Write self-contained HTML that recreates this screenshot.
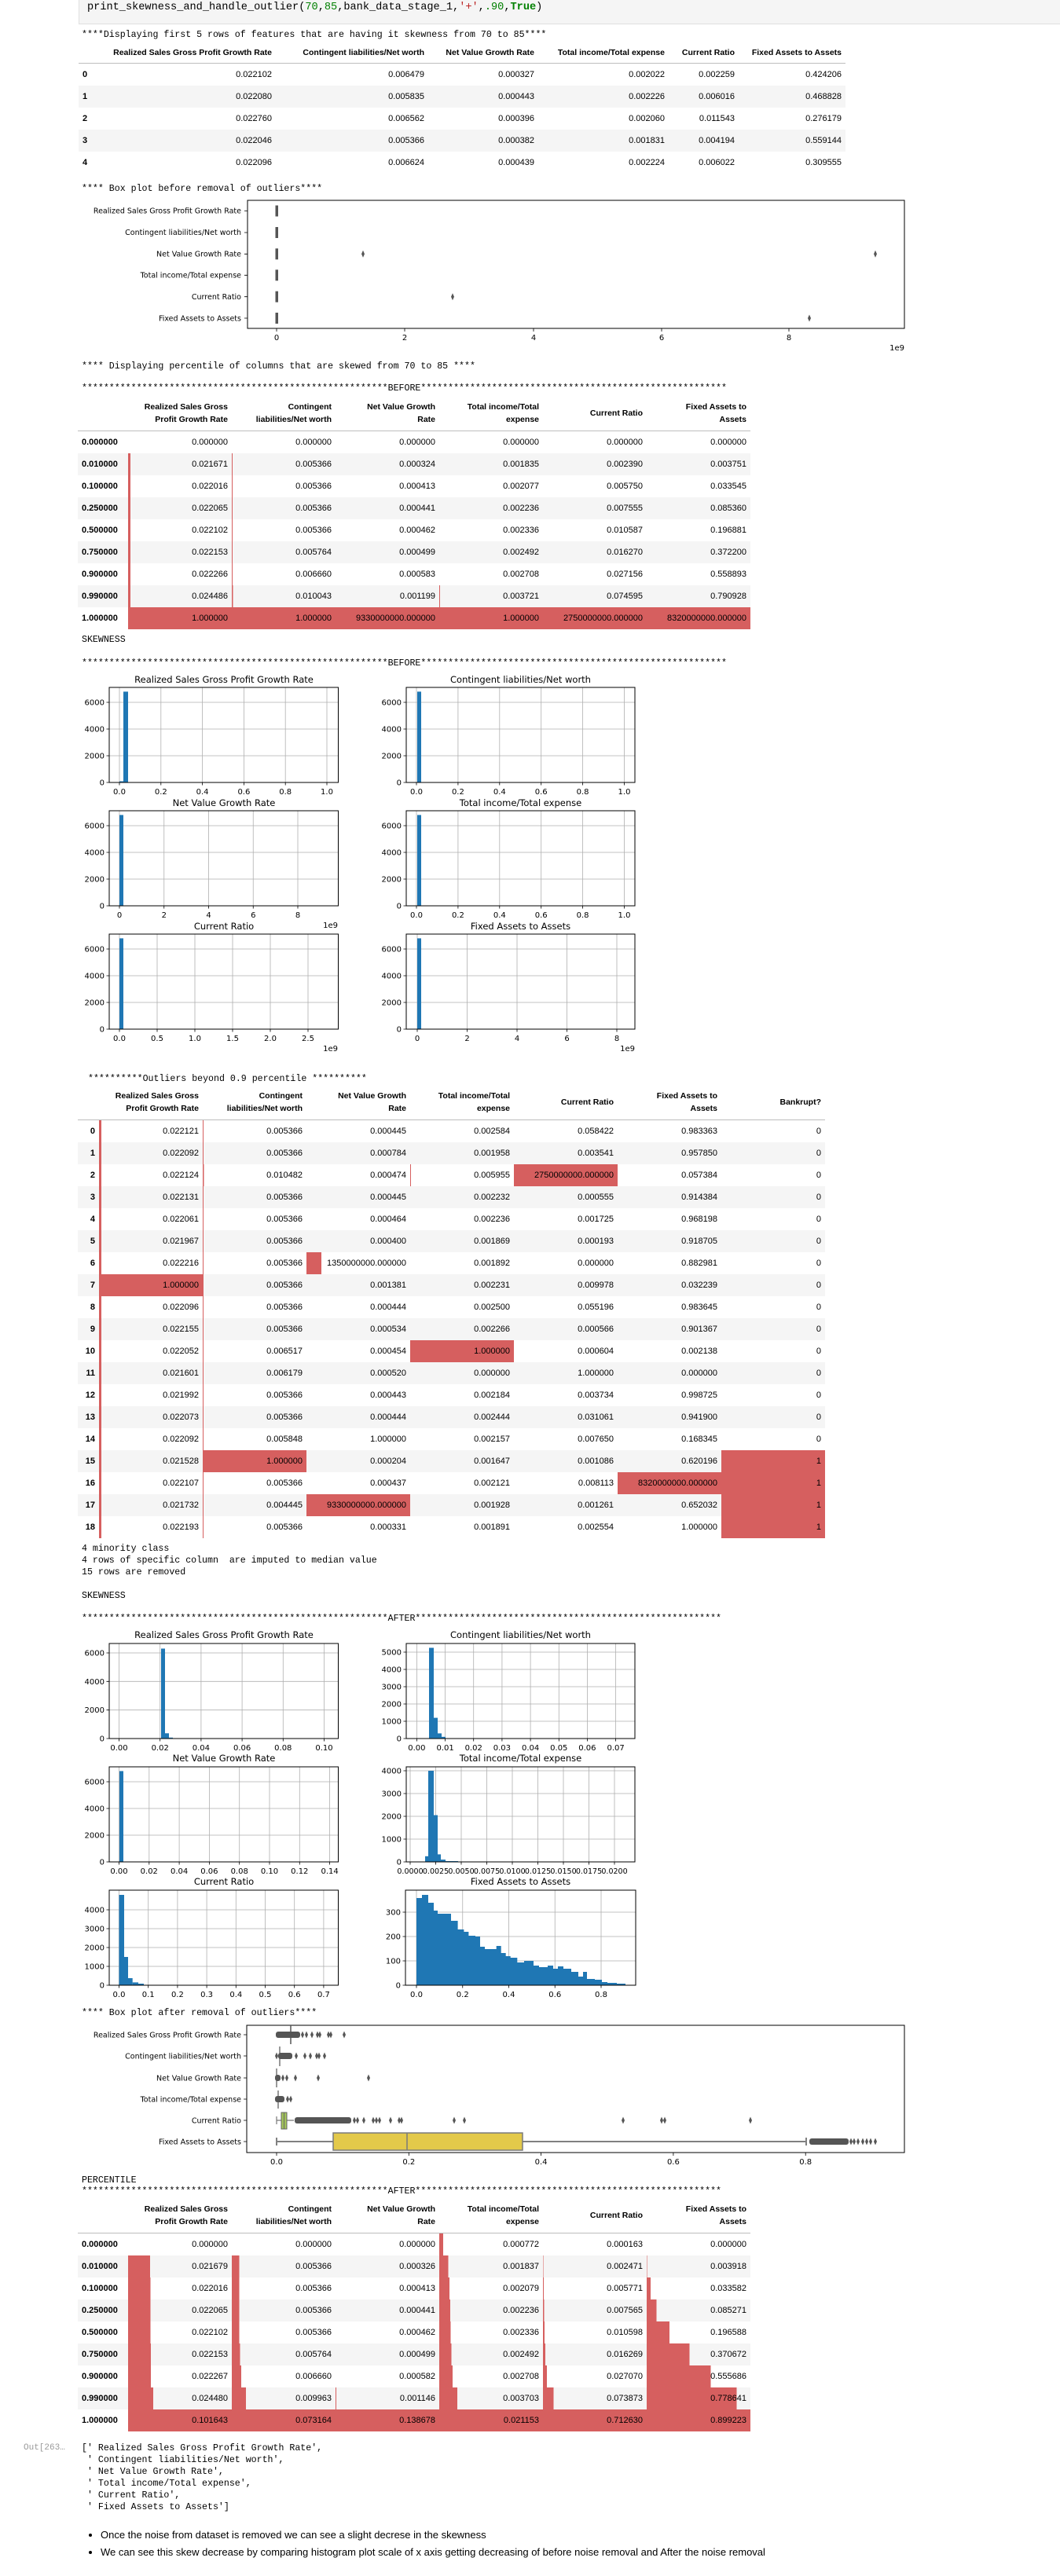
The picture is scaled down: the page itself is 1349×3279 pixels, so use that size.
<!DOCTYPE html>
<html><head><meta charset="utf-8">
<style>
html,body{margin:0;padding:0;background:#fff}
body{width:1349px;height:3279px;position:relative;overflow:hidden;font-family:"Liberation Sans",sans-serif;color:#000}
.m{position:absolute;font-family:"Liberation Mono",monospace;font-size:11.6px;line-height:15px;white-space:pre;color:#000}
.code{position:absolute;left:100px;top:-1px;width:1249px;height:32px;background:#f5f5f5;border-bottom:1px solid #e0e0e0;border-left:1px solid #e0e0e0;box-sizing:border-box}
.code span.c{position:absolute;left:10px;top:3px;font-family:"Liberation Mono",monospace;font-size:13.6px;white-space:pre}
.gn{color:#008000}.rd{color:#ba2121}
table.t{position:absolute;border-collapse:collapse;table-layout:fixed;font-size:11px;border-spacing:0}
.t th,.t td{padding:0 5px;text-align:right;white-space:nowrap;overflow:visible;line-height:16px}
.t tbody td,.t tbody th{height:28px}
.t thead th{font-weight:bold;font-size:10.5px;border-bottom:1.5px solid #bdbdbd;vertical-align:middle}
.t tbody tr:nth-child(even){background:#f5f5f5}
.t tbody th{text-align:left;font-weight:bold}
.b{background-image:linear-gradient(90deg,#d65f5f var(--w),transparent var(--w))}
.f{background:#d65f5f}
svg{position:absolute;left:0;top:0}
svg text{font-family:"DejaVu Sans",sans-serif;font-size:10px;fill:#000}
.g{stroke:#b0b0b0;stroke-width:.8;fill:none}
.fr{fill:none;stroke:#000;stroke-width:1}
.tk{stroke:#000;stroke-width:.8;fill:none}
.hb{fill:#1f77b4}
ul{position:absolute;left:88px;top:3216px;margin:0;padding-left:40px;font-size:13px;line-height:22px}
</style></head><body>

<div class="code"><span class="c">print_skewness_and_handle_outlier(<span class="gn">70</span>,<span class="gn">85</span>,bank_data_stage_1,<span class="rd">'+'</span>,<span class="gn">.90</span>,<b class="gn">True</b>)</span></div>

<div class="m" style="left:104px;top:37px">****Displaying first 5 rows of features that are having it skewness from 70 to 85****</div>

<table class="t" style="left:100px;top:54px;width:976px">
<colgroup><col style="width:20px"><col style="width:231px"><col style="width:194px"><col style="width:140px"><col style="width:166px"><col style="width:89px"><col style="width:136px"></colgroup>
<thead><tr style="height:26px"><th></th><th>Realized Sales Gross Profit Growth Rate</th><th>Contingent liabilities/Net worth</th><th>Net Value Growth Rate</th><th>Total income/Total expense</th><th>Current Ratio</th><th>Fixed Assets to Assets</th></tr></thead>
<tbody>
<tr><th>0</th><td>0.022102</td><td>0.006479</td><td>0.000327</td><td>0.002022</td><td>0.002259</td><td>0.424206</td></tr>
<tr><th>1</th><td>0.022080</td><td>0.005835</td><td>0.000443</td><td>0.002226</td><td>0.006016</td><td>0.468828</td></tr>
<tr><th>2</th><td>0.022760</td><td>0.006562</td><td>0.000396</td><td>0.002060</td><td>0.011543</td><td>0.276179</td></tr>
<tr><th>3</th><td>0.022046</td><td>0.005366</td><td>0.000382</td><td>0.001831</td><td>0.004194</td><td>0.559144</td></tr>
<tr><th>4</th><td>0.022096</td><td>0.006624</td><td>0.000439</td><td>0.002224</td><td>0.006022</td><td>0.309555</td></tr>
</tbody></table>

<div class="m" style="left:104px;top:233px">**** Box plot before removal of outliers****</div>
<div class="m" style="left:104px;top:459px">**** Displaying percentile of columns that are skewed from 70 to 85 ****</div>
<div class="m" style="left:104px;top:487px">********************************************************BEFORE********************************************************</div>

<table class="t" style="left:99px;top:505px;width:856px">
<colgroup><col style="width:64px"><col style="width:132px"><col style="width:132px"><col style="width:132px"><col style="width:132px"><col style="width:132px"><col style="width:132px"></colgroup>
<thead><tr style="height:43px"><th></th><th>Realized Sales Gross<br>Profit Growth Rate</th><th>Contingent<br>liabilities/Net worth</th><th>Net Value Growth<br>Rate</th><th>Total income/Total<br>expense</th><th>Current Ratio</th><th>Fixed Assets to<br>Assets</th></tr></thead>
<tbody>
<tr><th>0.000000</th><td>0.000000</td><td>0.000000</td><td>0.000000</td><td>0.000000</td><td>0.000000</td><td>0.000000</td></tr>
<tr><th>0.010000</th><td class="b" style="--w:2.2%">0.021671</td><td class="b" style="--w:.7%">0.005366</td><td>0.000324</td><td>0.001835</td><td>0.002390</td><td>0.003751</td></tr>
<tr><th>0.100000</th><td class="b" style="--w:2.2%">0.022016</td><td class="b" style="--w:.7%">0.005366</td><td>0.000413</td><td>0.002077</td><td>0.005750</td><td>0.033545</td></tr>
<tr><th>0.250000</th><td class="b" style="--w:2.2%">0.022065</td><td class="b" style="--w:.7%">0.005366</td><td>0.000441</td><td>0.002236</td><td>0.007555</td><td>0.085360</td></tr>
<tr><th>0.500000</th><td class="b" style="--w:2.2%">0.022102</td><td class="b" style="--w:.7%">0.005366</td><td>0.000462</td><td>0.002336</td><td>0.010587</td><td>0.196881</td></tr>
<tr><th>0.750000</th><td class="b" style="--w:2.2%">0.022153</td><td class="b" style="--w:.7%">0.005764</td><td>0.000499</td><td>0.002492</td><td>0.016270</td><td>0.372200</td></tr>
<tr><th>0.900000</th><td class="b" style="--w:2.2%">0.022266</td><td class="b" style="--w:.7%">0.006660</td><td>0.000583</td><td>0.002708</td><td>0.027156</td><td>0.558893</td></tr>
<tr><th>0.990000</th><td class="b" style="--w:2.4%">0.024486</td><td class="b" style="--w:1%">0.010043</td><td>0.001199</td><td class="b" style="--w:.6%">0.003721</td><td>0.074595</td><td>0.790928</td></tr>
<tr><th>1.000000</th><td class="f">1.000000</td><td class="f">1.000000</td><td class="f">9330000000.000000</td><td class="f">1.000000</td><td class="f">2750000000.000000</td><td class="f">8320000000.000000</td></tr>
</tbody></table>

<div class="m" style="left:104px;top:807px">SKEWNESS</div>
<div class="m" style="left:104px;top:837px">********************************************************BEFORE********************************************************</div>

<div class="m" style="left:112px;top:1366px">**********Outliers beyond 0.9 percentile **********</div>

<table class="t" style="left:99px;top:1382px;width:951px">
<colgroup><col style="width:27px"><col style="width:132px"><col style="width:132px"><col style="width:132px"><col style="width:132px"><col style="width:132px"><col style="width:132px"><col style="width:132px"></colgroup>
<thead><tr style="height:43px"><th></th><th>Realized Sales Gross<br>Profit Growth Rate</th><th>Contingent<br>liabilities/Net worth</th><th>Net Value Growth<br>Rate</th><th>Total income/Total<br>expense</th><th>Current Ratio</th><th>Fixed Assets to<br>Assets</th><th>Bankrupt?</th></tr></thead>
<tbody>
<tr><th style="text-align:right">0</th><td class="b" style="--w:2.2%">0.022121</td><td class="b" style="--w:.8%">0.005366</td><td>0.000445</td><td>0.002584</td><td>0.058422</td><td>0.983363</td><td>0</td></tr>
<tr><th style="text-align:right">1</th><td class="b" style="--w:2.2%">0.022092</td><td class="b" style="--w:.8%">0.005366</td><td>0.000784</td><td>0.001958</td><td>0.003541</td><td>0.957850</td><td>0</td></tr>
<tr><th style="text-align:right">2</th><td class="b" style="--w:2.2%">0.022124</td><td class="b" style="--w:1%">0.010482</td><td>0.000474</td><td class="b" style="--w:.8%">0.005955</td><td class="f">2750000000.000000</td><td>0.057384</td><td>0</td></tr>
<tr><th style="text-align:right">3</th><td class="b" style="--w:2.2%">0.022131</td><td class="b" style="--w:.8%">0.005366</td><td>0.000445</td><td>0.002232</td><td>0.000555</td><td>0.914384</td><td>0</td></tr>
<tr><th style="text-align:right">4</th><td class="b" style="--w:2.2%">0.022061</td><td class="b" style="--w:.8%">0.005366</td><td>0.000464</td><td>0.002236</td><td>0.001725</td><td>0.968198</td><td>0</td></tr>
<tr><th style="text-align:right">5</th><td class="b" style="--w:2.2%">0.021967</td><td class="b" style="--w:.8%">0.005366</td><td>0.000400</td><td>0.001869</td><td>0.000193</td><td>0.918705</td><td>0</td></tr>
<tr><th style="text-align:right">6</th><td class="b" style="--w:2.2%">0.022216</td><td class="b" style="--w:.8%">0.005366</td><td class="b" style="--w:14.5%">1350000000.000000</td><td>0.001892</td><td>0.000000</td><td>0.882981</td><td>0</td></tr>
<tr><th style="text-align:right">7</th><td class="f">1.000000</td><td class="b" style="--w:.8%">0.005366</td><td>0.001381</td><td>0.002231</td><td>0.009978</td><td>0.032239</td><td>0</td></tr>
<tr><th style="text-align:right">8</th><td class="b" style="--w:2.2%">0.022096</td><td class="b" style="--w:.8%">0.005366</td><td>0.000444</td><td>0.002500</td><td>0.055196</td><td>0.983645</td><td>0</td></tr>
<tr><th style="text-align:right">9</th><td class="b" style="--w:2.2%">0.022155</td><td class="b" style="--w:.8%">0.005366</td><td>0.000534</td><td>0.002266</td><td>0.000566</td><td>0.901367</td><td>0</td></tr>
<tr><th style="text-align:right">10</th><td class="b" style="--w:2.2%">0.022052</td><td class="b" style="--w:.8%">0.006517</td><td>0.000454</td><td class="f">1.000000</td><td>0.000604</td><td>0.002138</td><td>0</td></tr>
<tr><th style="text-align:right">11</th><td class="b" style="--w:2.2%">0.021601</td><td class="b" style="--w:.8%">0.006179</td><td>0.000520</td><td>0.000000</td><td>1.000000</td><td>0.000000</td><td>0</td></tr>
<tr><th style="text-align:right">12</th><td class="b" style="--w:2.2%">0.021992</td><td class="b" style="--w:.8%">0.005366</td><td>0.000443</td><td>0.002184</td><td>0.003734</td><td>0.998725</td><td>0</td></tr>
<tr><th style="text-align:right">13</th><td class="b" style="--w:2.2%">0.022073</td><td class="b" style="--w:.8%">0.005366</td><td>0.000444</td><td>0.002444</td><td>0.031061</td><td>0.941900</td><td>0</td></tr>
<tr><th style="text-align:right">14</th><td class="b" style="--w:2.2%">0.022092</td><td class="b" style="--w:.8%">0.005848</td><td>1.000000</td><td>0.002157</td><td>0.007650</td><td>0.168345</td><td>0</td></tr>
<tr><th style="text-align:right">15</th><td class="b" style="--w:2.2%">0.021528</td><td class="f">1.000000</td><td>0.000204</td><td>0.001647</td><td>0.001086</td><td>0.620196</td><td class="f">1</td></tr>
<tr><th style="text-align:right">16</th><td class="b" style="--w:2.2%">0.022107</td><td class="b" style="--w:.8%">0.005366</td><td>0.000437</td><td>0.002121</td><td>0.008113</td><td class="f">8320000000.000000</td><td class="f">1</td></tr>
<tr><th style="text-align:right">17</th><td class="b" style="--w:2.2%">0.021732</td><td class="b" style="--w:.8%">0.004445</td><td class="f">9330000000.000000</td><td>0.001928</td><td>0.001261</td><td>0.652032</td><td class="f">1</td></tr>
<tr><th style="text-align:right">18</th><td class="b" style="--w:2.2%">0.022193</td><td class="b" style="--w:.8%">0.005366</td><td>0.000331</td><td>0.001891</td><td>0.002554</td><td>1.000000</td><td class="f">1</td></tr>
</tbody></table>

<div class="m" style="left:104px;top:1964px">4 minority class
4 rows of specific column  are imputed to median value
15 rows are removed</div>
<div class="m" style="left:104px;top:2024px">SKEWNESS</div>
<div class="m" style="left:104px;top:2053px">********************************************************AFTER********************************************************</div>

<div class="m" style="left:104px;top:2555px">**** Box plot after removal of outliers****</div>
<div class="m" style="left:104px;top:2768px">PERCENTILE</div>
<div class="m" style="left:104px;top:2782px">********************************************************AFTER********************************************************</div>

<table class="t" style="left:99px;top:2799px;width:856px">
<colgroup><col style="width:64px"><col style="width:132px"><col style="width:132px"><col style="width:132px"><col style="width:132px"><col style="width:132px"><col style="width:132px"></colgroup>
<thead><tr style="height:43px"><th></th><th>Realized Sales Gross<br>Profit Growth Rate</th><th>Contingent<br>liabilities/Net worth</th><th>Net Value Growth<br>Rate</th><th>Total income/Total<br>expense</th><th>Current Ratio</th><th>Fixed Assets to<br>Assets</th></tr></thead>
<tbody>
<tr><th>0.000000</th><td>0.000000</td><td>0.000000</td><td>0.000000</td><td class="b" style="--w:3.65%">0.000772</td><td>0.000163</td><td>0.000000</td></tr>
<tr><th>0.010000</th><td class="b" style="--w:21.33%">0.021679</td><td class="b" style="--w:7.33%">0.005366</td><td>0.000326</td><td class="b" style="--w:8.68%">0.001837</td><td class="b" style="--w:.5%">0.002471</td><td class="b" style="--w:.5%">0.003918</td></tr>
<tr><th>0.100000</th><td class="b" style="--w:21.66%">0.022016</td><td class="b" style="--w:7.33%">0.005366</td><td>0.000413</td><td class="b" style="--w:9.83%">0.002079</td><td class="b" style="--w:.81%">0.005771</td><td class="b" style="--w:3.73%">0.033582</td></tr>
<tr><th>0.250000</th><td class="b" style="--w:21.71%">0.022065</td><td class="b" style="--w:7.33%">0.005366</td><td>0.000441</td><td class="b" style="--w:10.57%">0.002236</td><td class="b" style="--w:1.06%">0.007565</td><td class="b" style="--w:9.48%">0.085271</td></tr>
<tr><th>0.500000</th><td class="b" style="--w:21.76%">0.022102</td><td class="b" style="--w:7.33%">0.005366</td><td>0.000462</td><td class="b" style="--w:11.04%">0.002336</td><td class="b" style="--w:1.49%">0.010598</td><td class="b" style="--w:21.86%">0.196588</td></tr>
<tr><th>0.750000</th><td class="b" style="--w:21.79%">0.022153</td><td class="b" style="--w:7.88%">0.005764</td><td>0.000499</td><td class="b" style="--w:11.78%">0.002492</td><td class="b" style="--w:2.28%">0.016269</td><td class="b" style="--w:41.22%">0.370672</td></tr>
<tr><th>0.900000</th><td class="b" style="--w:21.91%">0.022267</td><td class="b" style="--w:9.1%">0.006660</td><td>0.000582</td><td class="b" style="--w:12.8%">0.002708</td><td class="b" style="--w:3.8%">0.027070</td><td class="b" style="--w:61.8%">0.555686</td></tr>
<tr><th>0.990000</th><td class="b" style="--w:24.09%">0.024480</td><td class="b" style="--w:13.62%">0.009963</td><td class="b" style="--w:.83%">0.001146</td><td class="b" style="--w:17.51%">0.003703</td><td class="b" style="--w:10.37%">0.073873</td><td class="b" style="--w:86.59%">0.778641</td></tr>
<tr><th>1.000000</th><td class="f">0.101643</td><td class="f">0.073164</td><td class="f">0.138678</td><td class="f">0.021153</td><td class="f">0.712630</td><td class="f">0.899223</td></tr>
</tbody></table>

<div class="m" style="left:30px;top:3109px;color:#9a9a9a;font-size:11px">Out[263…</div>
<div class="m" style="left:104px;top:3109px">[' Realized Sales Gross Profit Growth Rate',
 ' Contingent liabilities/Net worth',
 ' Net Value Growth Rate',
 ' Total income/Total expense',
 ' Current Ratio',
 ' Fixed Assets to Assets']</div>

<ul>
<li>Once the noise from dataset is removed we can see a slight decrese in the skewness</li>
<li>We can see this skew decrease by comparing histogram plot scale of x axis getting decreasing of before noise removal and After the noise removal</li>
</ul>

<svg width="1349" height="3279" viewBox="0 0 1349 3279">
<defs><path id="d" d="M0,-4.5 L2,0 L0,4.5 L-2,0 Z" fill="#555"/></defs>

<!-- BOX PLOT BEFORE -->
<rect class="fr" x="315" y="255" width="836" height="163"/>
<g text-anchor="end" font-size="9.5">
<text x="307" y="271.5" style="font-size:9.5px">Realized Sales Gross Profit Growth Rate</text>
<text x="307" y="299" style="font-size:9.5px">Contingent liabilities/Net worth</text>
<text x="307" y="326.5" style="font-size:9.5px">Net Value Growth Rate</text>
<text x="307" y="353.5" style="font-size:9.5px">Total income/Total expense</text>
<text x="307" y="381" style="font-size:9.5px">Current Ratio</text>
<text x="307" y="408.5" style="font-size:9.5px">Fixed Assets to Assets</text>
</g>
<path class="tk" d="M311,268.5H315M311,296H315M311,323.3H315M311,350.3H315M311,377.7H315M311,405H315M352,418V422M515,418V422M679,418V422M842,418V422M1004,418V422"/>
<g text-anchor="middle"><text x="352" y="433">0</text><text x="515" y="433">2</text><text x="679" y="433">4</text><text x="842" y="433">6</text><text x="1004" y="433">8</text></g>
<text x="1151" y="446" text-anchor="end">1e9</text>
<g fill="#555"><rect x="350.5" y="261.5" width="3.5" height="14"/><rect x="350.5" y="289" width="3.5" height="14"/><rect x="350.5" y="316.3" width="3.5" height="14"/><rect x="350.5" y="343.3" width="3.5" height="14"/><rect x="350.5" y="370.7" width="3.5" height="14"/><rect x="350.5" y="398" width="3.5" height="14"/></g>
<use href="#d" x="462" y="323.3"/><use href="#d" x="1114" y="323.3"/><use href="#d" x="576" y="377.7"/><use href="#d" x="1030" y="405"/>

<!-- HIST BEFORE -->
<g>
<text x="285" y="869" text-anchor="middle" style="font-size:11.5px">Realized Sales Gross Profit Growth Rate</text>
<text x="662.5" y="869" text-anchor="middle" style="font-size:11.5px">Contingent liabilities/Net worth</text>
<text x="285" y="1026" text-anchor="middle" style="font-size:11.5px">Net Value Growth Rate</text>
<text x="662.5" y="1026" text-anchor="middle" style="font-size:11.5px">Total income/Total expense</text>
<text x="285" y="1183" text-anchor="middle" style="font-size:11.5px">Current Ratio</text>
<text x="662.5" y="1183" text-anchor="middle" style="font-size:11.5px">Fixed Assets to Assets</text>
</g>
<!-- B1 -->
<path class="g" d="M152,875V996M204.8,875V996M257.6,875V996M310.4,875V996M363.2,875V996M416,875V996M139,894H430.5M139,928H430.5M139,962H430.5"/>
<rect class="hb" x="152" y="994.5" width="5" height="1.5"/><rect class="hb" x="157" y="880.4" width="6" height="115.6"/>
<rect class="fr" x="139" y="875" width="291.5" height="121"/>
<path class="tk" d="M135.5,996H139M135.5,962H139M135.5,928H139M135.5,894H139M152,996V999.5M204.8,996V999.5M257.6,996V999.5M310.4,996V999.5M363.2,996V999.5M416,996V999.5"/>
<g text-anchor="end"><text x="133" y="999.5">0</text><text x="133" y="965.5">2000</text><text x="133" y="931.5">4000</text><text x="133" y="897.5">6000</text></g>
<g text-anchor="middle"><text x="152" y="1011">0.0</text><text x="204.8" y="1011">0.2</text><text x="257.6" y="1011">0.4</text><text x="310.4" y="1011">0.6</text><text x="363.2" y="1011">0.8</text><text x="416" y="1011">1.0</text></g>
<!-- B2 -->
<path class="g" d="M530,875V996M582.9,875V996M635.8,875V996M688.7,875V996M741.6,875V996M794.5,875V996M517,894H808M517,928H808M517,962H808"/>
<rect class="hb" x="531" y="880.4" width="5" height="115.6"/>
<rect class="fr" x="517" y="875" width="291" height="121"/>
<path class="tk" d="M513.5,996H517M513.5,962H517M513.5,928H517M513.5,894H517M530,996V999.5M582.9,996V999.5M635.8,996V999.5M688.7,996V999.5M741.6,996V999.5M794.5,996V999.5"/>
<g text-anchor="end"><text x="511" y="999.5">0</text><text x="511" y="965.5">2000</text><text x="511" y="931.5">4000</text><text x="511" y="897.5">6000</text></g>
<g text-anchor="middle"><text x="530" y="1011">0.0</text><text x="582.9" y="1011">0.2</text><text x="635.8" y="1011">0.4</text><text x="688.7" y="1011">0.6</text><text x="741.6" y="1011">0.8</text><text x="794.5" y="1011">1.0</text></g>
<!-- B3 -->
<path class="g" d="M152,1032V1153M208.75,1032V1153M265.5,1032V1153M322.25,1032V1153M379,1032V1153M139,1051H430.5M139,1085H430.5M139,1119H430.5"/>
<rect class="hb" x="152" y="1037.4" width="5" height="115.6"/>
<rect class="fr" x="139" y="1032" width="291.5" height="121"/>
<path class="tk" d="M135.5,1153H139M135.5,1119H139M135.5,1085H139M135.5,1051H139M152,1153V1156.5M208.75,1153V1156.5M265.5,1153V1156.5M322.25,1153V1156.5M379,1153V1156.5"/>
<g text-anchor="end"><text x="133" y="1156.5">0</text><text x="133" y="1122.5">2000</text><text x="133" y="1088.5">4000</text><text x="133" y="1054.5">6000</text></g>
<g text-anchor="middle"><text x="152" y="1168">0</text><text x="208.75" y="1168">2</text><text x="265.5" y="1168">4</text><text x="322.25" y="1168">6</text><text x="379" y="1168">8</text></g>
<text x="430" y="1181" text-anchor="end">1e9</text>
<!-- B4 -->
<path class="g" d="M530,1032V1153M582.9,1032V1153M635.8,1032V1153M688.7,1032V1153M741.6,1032V1153M794.5,1032V1153M517,1051H808M517,1085H808M517,1119H808"/>
<rect class="hb" x="531" y="1037.4" width="5" height="115.6"/>
<rect class="fr" x="517" y="1032" width="291" height="121"/>
<path class="tk" d="M513.5,1153H517M513.5,1119H517M513.5,1085H517M513.5,1051H517M530,1153V1156.5M582.9,1153V1156.5M635.8,1153V1156.5M688.7,1153V1156.5M741.6,1153V1156.5M794.5,1153V1156.5"/>
<g text-anchor="end"><text x="511" y="1156.5">0</text><text x="511" y="1122.5">2000</text><text x="511" y="1088.5">4000</text><text x="511" y="1054.5">6000</text></g>
<g text-anchor="middle"><text x="530" y="1168">0.0</text><text x="582.9" y="1168">0.2</text><text x="635.8" y="1168">0.4</text><text x="688.7" y="1168">0.6</text><text x="741.6" y="1168">0.8</text><text x="794.5" y="1168">1.0</text></g>
<!-- B5 -->
<path class="g" d="M152,1189V1310M200,1189V1310M248,1189V1310M296,1189V1310M344,1189V1310M392,1189V1310M139,1208H430.5M139,1242H430.5M139,1276H430.5"/>
<rect class="hb" x="152" y="1194.4" width="5" height="115.6"/>
<rect class="fr" x="139" y="1189" width="291.5" height="121"/>
<path class="tk" d="M135.5,1310H139M135.5,1276H139M135.5,1242H139M135.5,1208H139M152,1310V1313.5M200,1310V1313.5M248,1310V1313.5M296,1310V1313.5M344,1310V1313.5M392,1310V1313.5"/>
<g text-anchor="end"><text x="133" y="1313.5">0</text><text x="133" y="1279.5">2000</text><text x="133" y="1245.5">4000</text><text x="133" y="1211.5">6000</text></g>
<g text-anchor="middle"><text x="152" y="1325">0.0</text><text x="200" y="1325">0.5</text><text x="248" y="1325">1.0</text><text x="296" y="1325">1.5</text><text x="344" y="1325">2.0</text><text x="392" y="1325">2.5</text></g>
<text x="430" y="1338" text-anchor="end">1e9</text>
<!-- B6 -->
<path class="g" d="M531,1189V1310M594.5,1189V1310M658,1189V1310M721.5,1189V1310M785,1189V1310M517,1208H808M517,1242H808M517,1276H808"/>
<rect class="hb" x="531" y="1194.4" width="5" height="115.6"/>
<rect class="fr" x="517" y="1189" width="291" height="121"/>
<path class="tk" d="M513.5,1310H517M513.5,1276H517M513.5,1242H517M513.5,1208H517M531,1310V1313.5M594.5,1310V1313.5M658,1310V1313.5M721.5,1310V1313.5M785,1310V1313.5"/>
<g text-anchor="end"><text x="511" y="1313.5">0</text><text x="511" y="1279.5">2000</text><text x="511" y="1245.5">4000</text><text x="511" y="1211.5">6000</text></g>
<g text-anchor="middle"><text x="531" y="1325">0</text><text x="594.5" y="1325">2</text><text x="658" y="1325">4</text><text x="721.5" y="1325">6</text><text x="785" y="1325">8</text></g>
<text x="808" y="1338" text-anchor="end">1e9</text>

<!-- HIST AFTER -->
<g>
<text x="285" y="2085" text-anchor="middle" style="font-size:11.5px">Realized Sales Gross Profit Growth Rate</text>
<text x="662.5" y="2085" text-anchor="middle" style="font-size:11.5px">Contingent liabilities/Net worth</text>
<text x="285" y="2242" text-anchor="middle" style="font-size:11.5px">Net Value Growth Rate</text>
<text x="662.5" y="2242" text-anchor="middle" style="font-size:11.5px">Total income/Total expense</text>
<text x="285" y="2399" text-anchor="middle" style="font-size:11.5px">Current Ratio</text>
<text x="662.5" y="2399" text-anchor="middle" style="font-size:11.5px">Fixed Assets to Assets</text>
</g>
<!-- A1 -->
<path class="g" d="M151.5,2092V2213M203.7,2092V2213M255.9,2092V2213M308.1,2092V2213M360.3,2092V2213M412.5,2092V2213M139,2104H430.5M139,2140.3H430.5M139,2176.7H430.5"/>
<rect class="hb" x="205" y="2098.5" width="5" height="114.5"/><rect class="hb" x="210" y="2206.3" width="5" height="6.7"/><rect class="hb" x="215" y="2211.8" width="5" height="1.2"/>
<rect class="fr" x="139" y="2092" width="291.5" height="121"/>
<path class="tk" d="M135.5,2213H139M135.5,2176.7H139M135.5,2140.3H139M135.5,2104H139M151.5,2213V2216.5M203.7,2213V2216.5M255.9,2213V2216.5M308.1,2213V2216.5M360.3,2213V2216.5M412.5,2213V2216.5"/>
<g text-anchor="end"><text x="133" y="2216.5">0</text><text x="133" y="2180.2">2000</text><text x="133" y="2143.8">4000</text><text x="133" y="2107.5">6000</text></g>
<g text-anchor="middle"><text x="151.5" y="2228">0.00</text><text x="203.7" y="2228">0.02</text><text x="255.9" y="2228">0.04</text><text x="308.1" y="2228">0.06</text><text x="360.3" y="2228">0.08</text><text x="412.5" y="2228">0.10</text></g>
<!-- A2 -->
<path class="g" d="M530.4,2092V2213M566.6,2092V2213M602.7,2092V2213M638.9,2092V2213M675.1,2092V2213M711.3,2092V2213M747.4,2092V2213M783.6,2092V2213M517,2103H808M517,2125H808M517,2147H808M517,2169H808M517,2191H808"/>
<rect class="hb" x="546" y="2097.5" width="6" height="115.5"/><rect class="hb" x="552" y="2186.6" width="5" height="26.4"/><rect class="hb" x="557" y="2206.4" width="5" height="6.6"/><rect class="hb" x="562" y="2210.8" width="5" height="2.2"/>
<rect class="fr" x="517" y="2092" width="291" height="121"/>
<path class="tk" d="M513.5,2213H517M513.5,2191H517M513.5,2169H517M513.5,2147H517M513.5,2125H517M513.5,2103H517M530.4,2213V2216.5M566.6,2213V2216.5M602.7,2213V2216.5M638.9,2213V2216.5M675.1,2213V2216.5M711.3,2213V2216.5M747.4,2213V2216.5M783.6,2213V2216.5"/>
<g text-anchor="end"><text x="511" y="2216.5">0</text><text x="511" y="2194.5">1000</text><text x="511" y="2172.5">2000</text><text x="511" y="2150.5">3000</text><text x="511" y="2128.5">4000</text><text x="511" y="2106.5">5000</text></g>
<g text-anchor="middle"><text x="530.4" y="2228">0.00</text><text x="566.6" y="2228">0.01</text><text x="602.7" y="2228">0.02</text><text x="638.9" y="2228">0.03</text><text x="675.1" y="2228">0.04</text><text x="711.3" y="2228">0.05</text><text x="747.4" y="2228">0.06</text><text x="783.6" y="2228">0.07</text></g>
<!-- A3 -->
<path class="g" d="M151.5,2249V2370M189.8,2249V2370M228.1,2249V2370M266.4,2249V2370M304.7,2249V2370M343,2249V2370M381.3,2249V2370M419.6,2249V2370M139,2268H430.5M139,2302H430.5M139,2336H430.5"/>
<rect class="hb" x="152" y="2254.4" width="5" height="115.6"/>
<rect class="fr" x="139" y="2249" width="291.5" height="121"/>
<path class="tk" d="M135.5,2370H139M135.5,2336H139M135.5,2302H139M135.5,2268H139M151.5,2370V2373.5M189.8,2370V2373.5M228.1,2370V2373.5M266.4,2370V2373.5M304.7,2370V2373.5M343,2370V2373.5M381.3,2370V2373.5M419.6,2370V2373.5"/>
<g text-anchor="end"><text x="133" y="2373.5">0</text><text x="133" y="2339.5">2000</text><text x="133" y="2305.5">4000</text><text x="133" y="2271.5">6000</text></g>
<g text-anchor="middle"><text x="151.5" y="2385">0.00</text><text x="189.8" y="2385">0.02</text><text x="228.1" y="2385">0.04</text><text x="266.4" y="2385">0.06</text><text x="304.7" y="2385">0.08</text><text x="343" y="2385">0.10</text><text x="381.3" y="2385">0.12</text><text x="419.6" y="2385">0.14</text></g>
<!-- A4 -->
<path class="g" d="M522,2249V2370M554.5,2249V2370M587,2249V2370M619.5,2249V2370M652,2249V2370M684.5,2249V2370M717,2249V2370M749.5,2249V2370M782,2249V2370M517,2254H808M517,2283H808M517,2312H808M517,2341H808"/>
<rect class="hb" x="541" y="2362.8" width="4" height="7.2"/><rect class="hb" x="545" y="2254" width="7" height="116"/><rect class="hb" x="552" y="2310.5" width="5" height="59.5"/><rect class="hb" x="557" y="2360.4" width="4" height="9.6"/><rect class="hb" x="561" y="2367.1" width="6" height="2.9"/><rect class="hb" x="567" y="2369" width="16" height="1"/>
<rect class="fr" x="517" y="2249" width="291" height="121"/>
<path class="tk" d="M513.5,2370H517M513.5,2341H517M513.5,2312H517M513.5,2283H517M513.5,2254H517M522,2370V2373.5M554.5,2370V2373.5M587,2370V2373.5M619.5,2370V2373.5M652,2370V2373.5M684.5,2370V2373.5M717,2370V2373.5M749.5,2370V2373.5M782,2370V2373.5"/>
<g text-anchor="end"><text x="511" y="2373.5">0</text><text x="511" y="2344.5">1000</text><text x="511" y="2315.5">2000</text><text x="511" y="2286.5">3000</text><text x="511" y="2257.5">4000</text></g>
<g text-anchor="middle" style="font-size:9.5px"><text x="522" y="2385" style="font-size:9.5px">0.0000</text><text x="554.5" y="2385" style="font-size:9.5px">0.0025</text><text x="587" y="2385" style="font-size:9.5px">0.0050</text><text x="619.5" y="2385" style="font-size:9.5px">0.0075</text><text x="652" y="2385" style="font-size:9.5px">0.0100</text><text x="684.5" y="2385" style="font-size:9.5px">0.0125</text><text x="717" y="2385" style="font-size:9.5px">0.0150</text><text x="749.5" y="2385" style="font-size:9.5px">0.0175</text><text x="782" y="2385" style="font-size:9.5px">0.0200</text></g>
<!-- A5 -->
<path class="g" d="M151.5,2406V2527M188.7,2406V2527M225.9,2406V2527M263.1,2406V2527M300.3,2406V2527M337.5,2406V2527M374.7,2406V2527M411.9,2406V2527M139,2431H430.5M139,2455H430.5M139,2479H430.5M139,2503H430.5"/>
<rect class="hb" x="151.5" y="2412" width="6.5" height="115"/><rect class="hb" x="158" y="2491" width="5" height="36"/><rect class="hb" x="163" y="2518" width="5.7" height="9"/><rect class="hb" x="168.7" y="2523.4" width="7.3" height="3.6"/><rect class="hb" x="176" y="2525" width="7" height="2"/>
<rect class="fr" x="139" y="2406" width="291.5" height="121"/>
<path class="tk" d="M135.5,2527H139M135.5,2503H139M135.5,2479H139M135.5,2455H139M135.5,2431H139M151.5,2527V2530.5M188.7,2527V2530.5M225.9,2527V2530.5M263.1,2527V2530.5M300.3,2527V2530.5M337.5,2527V2530.5M374.7,2527V2530.5M411.9,2527V2530.5"/>
<g text-anchor="end"><text x="133" y="2530.5">0</text><text x="133" y="2506.5">1000</text><text x="133" y="2482.5">2000</text><text x="133" y="2458.5">3000</text><text x="133" y="2434.5">4000</text></g>
<g text-anchor="middle"><text x="151.5" y="2542">0.0</text><text x="188.7" y="2542">0.1</text><text x="225.9" y="2542">0.2</text><text x="263.1" y="2542">0.3</text><text x="300.3" y="2542">0.4</text><text x="337.5" y="2542">0.5</text><text x="374.7" y="2542">0.6</text><text x="411.9" y="2542">0.7</text></g>
<!-- A6 -->
<path class="g" d="M530,2406V2527M588.75,2406V2527M647.5,2406V2527M706.25,2406V2527M765,2406V2527M516,2434H809M516,2465H809M516,2496H809"/>
<path class="hb" d="M530,2527V2416H537V2412H545V2422H552V2432H557V2436H568V2436H574V2445H582.6V2456H590.4V2459H596.4V2464H605V2465H611V2478H617V2481H631.7V2477H637.7V2486H643.7V2490H649.7V2492H658.3V2498H667V2496H679V2502H686V2504H697V2502H704V2506H710V2503H717V2506H727V2510H736V2516H742V2510H747V2519H757V2520H766V2523H773V2524H785V2525H796V2527Z"/>
<rect class="fr" x="516" y="2406" width="293" height="121"/>
<path class="tk" d="M512.5,2527H516M512.5,2496H516M512.5,2465H516M512.5,2434H516M530,2527V2530.5M588.75,2527V2530.5M647.5,2527V2530.5M706.25,2527V2530.5M765,2527V2530.5"/>
<g text-anchor="end"><text x="510" y="2530.5">0</text><text x="510" y="2499.5">100</text><text x="510" y="2468.5">200</text><text x="510" y="2437.5">300</text></g>
<g text-anchor="middle"><text x="530" y="2542">0.0</text><text x="588.75" y="2542">0.2</text><text x="647.5" y="2542">0.4</text><text x="706.25" y="2542">0.6</text><text x="765" y="2542">0.8</text></g>

<!-- BOX PLOT AFTER -->
<rect class="fr" x="314" y="2578" width="837" height="162"/>
<g text-anchor="end">
<text x="307" y="2593.5" style="font-size:9.5px">Realized Sales Gross Profit Growth Rate</text>
<text x="307" y="2620.5" style="font-size:9.5px">Contingent liabilities/Net worth</text>
<text x="307" y="2648.5" style="font-size:9.5px">Net Value Growth Rate</text>
<text x="307" y="2675.5" style="font-size:9.5px">Total income/Total expense</text>
<text x="307" y="2702.5" style="font-size:9.5px">Current Ratio</text>
<text x="307" y="2729.5" style="font-size:9.5px">Fixed Assets to Assets</text>
</g>
<path class="tk" d="M310,2590H314M310,2617H314M310,2645H314M310,2672H314M310,2699H314M310,2726H314M352,2740V2744M520.3,2740V2744M688.6,2740V2744M856.9,2740V2744M1025.2,2740V2744"/>
<g text-anchor="middle"><text x="352" y="2755">0.0</text><text x="520.3" y="2755">0.2</text><text x="688.6" y="2755">0.4</text><text x="856.9" y="2755">0.6</text><text x="1025.2" y="2755">0.8</text></g>
<!-- realized -->
<rect x="351" y="2586" width="31" height="8" rx="3" fill="#555"/>
<use href="#d" x="385" y="2590"/><use href="#d" x="390" y="2590"/><use href="#d" x="397" y="2590"/><use href="#d" x="404" y="2590"/><use href="#d" x="407" y="2590"/><use href="#d" x="418" y="2590"/><use href="#d" x="421" y="2590"/><use href="#d" x="438" y="2590"/>
<path d="M370,2578V2602" stroke="#555" stroke-width="1.5"/>
<!-- contingent -->
<rect x="354" y="2613" width="18" height="8" rx="3" fill="#555"/><use href="#d" x="352" y="2617"/>
<use href="#d" x="377" y="2617"/><use href="#d" x="388" y="2617"/><use href="#d" x="395" y="2617"/><use href="#d" x="403" y="2617"/><use href="#d" x="406" y="2617"/><use href="#d" x="413" y="2617"/>
<path d="M356,2605V2630" stroke="#555" stroke-width="1.2"/>
<!-- net -->
<rect x="350" y="2641" width="7" height="8" rx="3" fill="#555"/><use href="#d" x="360" y="2645"/><use href="#d" x="365" y="2645"/><use href="#d" x="376" y="2645"/><use href="#d" x="405" y="2645"/><use href="#d" x="469" y="2645"/>
<path d="M352,2633V2657" stroke="#555" stroke-width="1.2"/>
<!-- total -->
<rect x="350" y="2668" width="12" height="8" rx="3" fill="#555"/><use href="#d" x="366" y="2672"/><use href="#d" x="370" y="2672"/>
<path d="M354,2661V2684" stroke="#555" stroke-width="1.2"/>
<!-- current -->
<path d="M352,2699H358M352,2694V2704M365,2699H374" stroke="#777" stroke-width="1.2"/>
<rect x="358" y="2689" width="7" height="21" fill="#a3c45a" stroke="#666" stroke-width="1"/>
<path d="M361.5,2689V2710" stroke="#666" stroke-width="1"/>
<rect x="375" y="2695" width="72" height="8" rx="3" fill="#555"/>
<use href="#d" x="451" y="2699"/><use href="#d" x="455" y="2699"/><use href="#d" x="463" y="2699"/><use href="#d" x="475" y="2699"/><use href="#d" x="479" y="2699"/><use href="#d" x="483" y="2699"/><use href="#d" x="497" y="2699"/><use href="#d" x="508" y="2699"/><use href="#d" x="511" y="2699"/><use href="#d" x="578" y="2699"/><use href="#d" x="591" y="2699"/><use href="#d" x="793" y="2699"/><use href="#d" x="842" y="2699"/><use href="#d" x="846" y="2699"/><use href="#d" x="955" y="2699"/>
<!-- fixed -->
<path d="M352,2726H424M665,2726H1026M352,2721V2731M1026,2721V2731" stroke="#808080" stroke-width="2"/>
<rect x="424" y="2715" width="241" height="22" fill="#e3c94a" stroke="#7a7a7a" stroke-width="1.5"/>
<path d="M518,2715V2737" stroke="#7a7a7a" stroke-width="1.5"/>
<rect x="1030" y="2722" width="50" height="8" rx="3" fill="#555"/>
<use href="#d" x="1083" y="2726"/><use href="#d" x="1087" y="2726"/><use href="#d" x="1092" y="2726"/><use href="#d" x="1098" y="2726"/><use href="#d" x="1103" y="2726"/><use href="#d" x="1108" y="2726"/><use href="#d" x="1114" y="2726"/>
</svg>
</body></html>
